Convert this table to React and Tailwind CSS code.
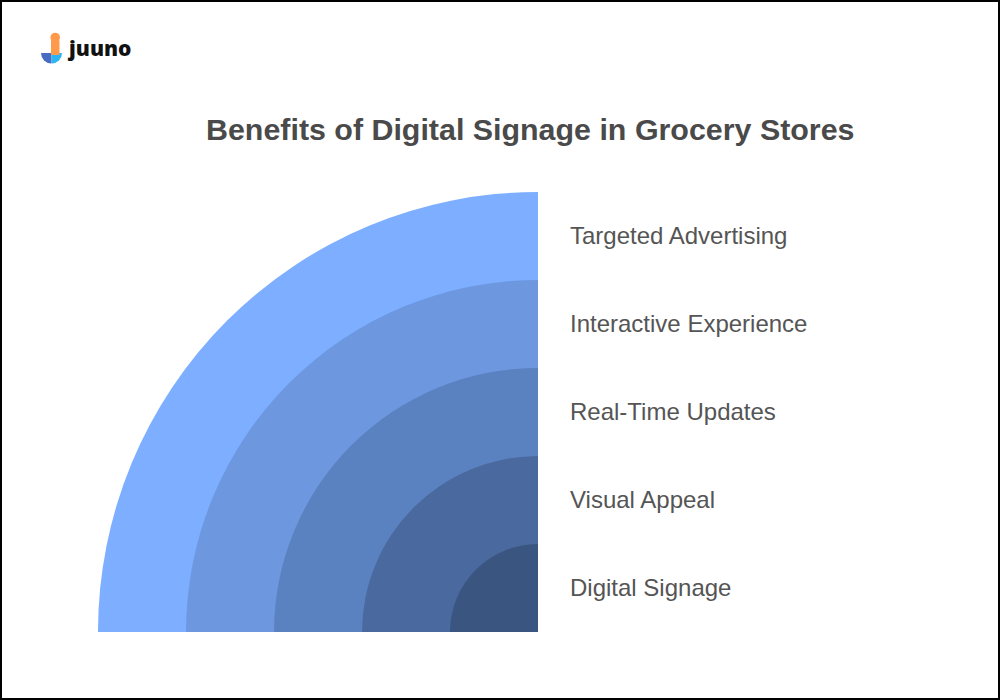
import React from "react";

const bands = [
  { label: "Targeted Advertising", color: "bg-[#7daeff]" },
  { label: "Interactive Experience", color: "bg-[#6d98e0]" },
  { label: "Real-Time Updates", color: "bg-[#5b82c0]" },
  { label: "Visual Appeal", color: "bg-[#4a6a9f]" },
  { label: "Digital Signage", color: "bg-[#3a5580]" }
];

const sizes = ["w-[440px] h-[440px]", "w-[352px] h-[352px]", "w-[264px] h-[264px]", "w-[176px] h-[176px]", "w-[88px] h-[88px]"];

const Logo = () => (
  <div className="flex items-center gap-[6px]">
    <svg width="22" height="33" viewBox="0 0 22 33">
      <path d="M0 21 A10.5 10.5 0 0 0 10.5 31.5 L10.5 21 Z" fill="#4a6bc4" />
      <path d="M10.5 21 L10.5 31.5 A10.5 10.5 0 0 0 21 21 Z" fill="#2bb5f5" />
      <rect x="10" y="8" width="8.5" height="15" rx="1" fill="#ff9a4d" />
      <circle cx="14.2" cy="5.5" r="4.8" fill="#ff9a4d" />
    </svg>
    <span className="text-[21px] font-extrabold text-[#111] leading-none tracking-[0px] font-['Open_Sans','Lato',sans-serif]">
      juuno
    </span>
  </div>
);

// nested quarter circles, largest outside
const Rings = ({ i = 0 }) => {
  if (i >= bands.length) return null;
  return (
    <div className={`${sizes[i]} ${bands[i].color} rounded-tl-full flex items-end justify-end`}>
      <Rings i={i + 1} />
    </div>
  );
};

export default function App() {
  return (
    <div className="w-[1000px] h-[700px] border-2 border-black bg-white box-border font-['Liberation_Sans',Arial,sans-serif]">
      <div className="pt-[30px] pl-[39px]">
        <Logo />
      </div>

      <h1 className="mt-[46px] pl-[204px] text-[30.4px] font-bold text-[#4a4a4a] leading-[36px]">
        Benefits of Digital Signage in Grocery Stores
      </h1>

      <div className="mt-[45px] pl-[96px] flex gap-[32px]">
        <Rings />
        <div className="flex flex-col">
          {bands.map((b) => (
            <div key={b.label} className="h-[88px] flex items-center text-[24px] text-[#555]">
              {b.label}
            </div>
          ))}
        </div>
      </div>
    </div>
  );
}
